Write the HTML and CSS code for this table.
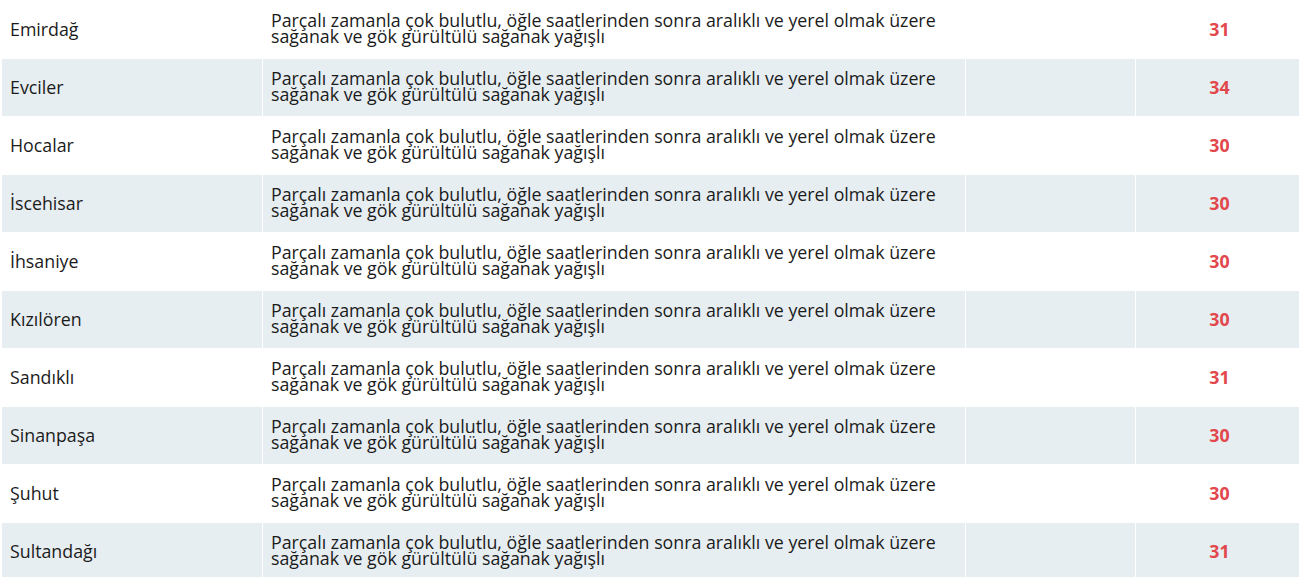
FILE: index.html
```html
<!DOCTYPE html>
<html lang="tr">
<head>
<meta charset="utf-8">
<link rel="stylesheet" href="styles.css">
</head>
<body>
<table class="forecast">
  <tbody>
    <tr><td class="name">Emirdağ</td><td class="desc">Parçalı zamanla çok bulutlu, öğle saatlerinden sonra aralıklı ve yerel olmak üzere sağanak ve gök gürültülü sağanak yağışlı</td><td class="empty"></td><td class="temp">31</td></tr>
    <tr><td class="name">Evciler</td><td class="desc">Parçalı zamanla çok bulutlu, öğle saatlerinden sonra aralıklı ve yerel olmak üzere sağanak ve gök gürültülü sağanak yağışlı</td><td class="empty"></td><td class="temp">34</td></tr>
    <tr><td class="name">Hocalar</td><td class="desc">Parçalı zamanla çok bulutlu, öğle saatlerinden sonra aralıklı ve yerel olmak üzere sağanak ve gök gürültülü sağanak yağışlı</td><td class="empty"></td><td class="temp">30</td></tr>
    <tr><td class="name">İscehisar</td><td class="desc">Parçalı zamanla çok bulutlu, öğle saatlerinden sonra aralıklı ve yerel olmak üzere sağanak ve gök gürültülü sağanak yağışlı</td><td class="empty"></td><td class="temp">30</td></tr>
    <tr><td class="name">İhsaniye</td><td class="desc">Parçalı zamanla çok bulutlu, öğle saatlerinden sonra aralıklı ve yerel olmak üzere sağanak ve gök gürültülü sağanak yağışlı</td><td class="empty"></td><td class="temp">30</td></tr>
    <tr><td class="name">Kızılören</td><td class="desc">Parçalı zamanla çok bulutlu, öğle saatlerinden sonra aralıklı ve yerel olmak üzere sağanak ve gök gürültülü sağanak yağışlı</td><td class="empty"></td><td class="temp">30</td></tr>
    <tr><td class="name">Sandıklı</td><td class="desc">Parçalı zamanla çok bulutlu, öğle saatlerinden sonra aralıklı ve yerel olmak üzere sağanak ve gök gürültülü sağanak yağışlı</td><td class="empty"></td><td class="temp">31</td></tr>
    <tr><td class="name">Sinanpaşa</td><td class="desc">Parçalı zamanla çok bulutlu, öğle saatlerinden sonra aralıklı ve yerel olmak üzere sağanak ve gök gürültülü sağanak yağışlı</td><td class="empty"></td><td class="temp">30</td></tr>
    <tr><td class="name">Şuhut</td><td class="desc">Parçalı zamanla çok bulutlu, öğle saatlerinden sonra aralıklı ve yerel olmak üzere sağanak ve gök gürültülü sağanak yağışlı</td><td class="empty"></td><td class="temp">30</td></tr>
    <tr><td class="name">Sultandağı</td><td class="desc">Parçalı zamanla çok bulutlu, öğle saatlerinden sonra aralıklı ve yerel olmak üzere sağanak ve gök gürültülü sağanak yağışlı</td><td class="empty"></td><td class="temp">31</td></tr>
  </tbody>
</table>
</body>
</html>
```
FILE: styles.css
```css
html, body {
  margin: 0;
  padding: 0;
  background: #ffffff;
}
body {
  padding-left: 1px;
  font-family: "Open Sans", "DejaVu Sans", sans-serif;
  font-size: 17.8px;
  color: #1b1b1b;
}
.forecast {
  border-collapse: separate;
  border-spacing: 1px;
  width: 1299px;
  table-layout: fixed;
}
.forecast td {
  height: 57px;
  padding: 0 8px;
  vertical-align: middle;
  box-sizing: border-box;
}
.forecast tr:nth-child(even) td {
  background: #e7eef2;
}
.name { width: 260px; padding-bottom: 2px !important; }
.desc { width: 702px; line-height: 15.5px; padding-bottom: 2px !important; }
.empty { width: 169px; }
.temp {
  text-align: center;
  font-weight: 700;
  color: #e2474b;
  padding-left: 12px !important;
  padding-bottom: 2px !important;
}
```
